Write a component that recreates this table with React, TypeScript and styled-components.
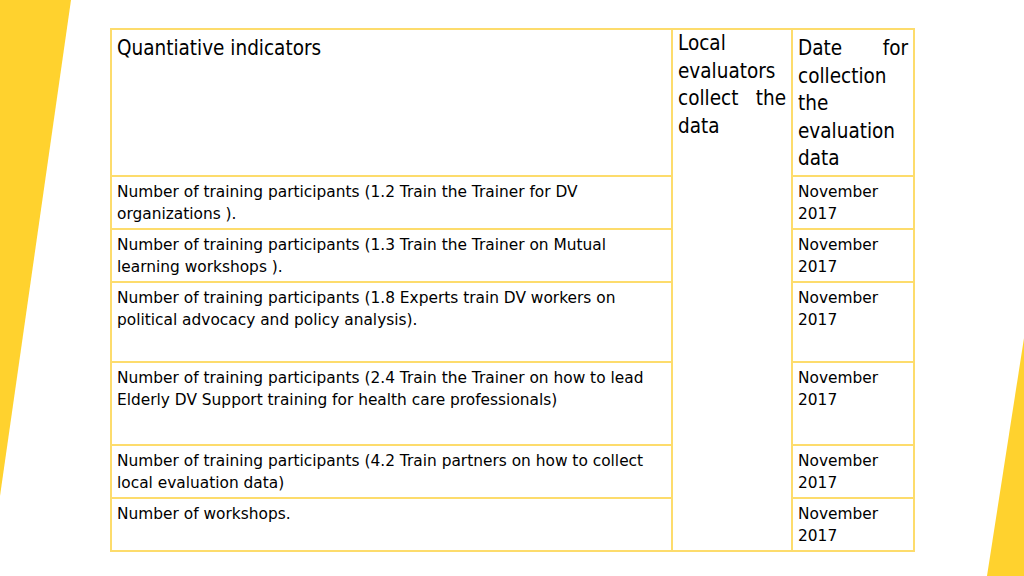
import React from "react";
import styled, { createGlobalStyle } from "styled-components";

const Global = createGlobalStyle`
  html, body { margin: 0; padding: 0; background: #ffffff; }
  body { font-family: "DejaVu Sans", sans-serif; color: #000; }
`;

const Slide = styled.div`
  position: relative;
  width: 1024px;
  height: 576px;
  overflow: hidden;
  background: #ffffff;
  display: flex;
  padding: 28px 0 0 110px;
  box-sizing: border-box;
`;

const Deco = styled.svg`
  position: absolute;
  left: 0;
  top: 0;
  pointer-events: none;
`;

const Table = styled.table`
  position: relative;
  border-collapse: collapse;
  table-layout: fixed;
  width: 803px;
  height: 522px;
`;

const Cell = styled.td<{ $w?: number; $h?: number; $head?: boolean; $justify?: boolean; $pt?: number }>`
  border: 2px solid #fddc6c;
  vertical-align: top;
  padding: ${(p) => p.$pt ?? 4}px 5px 0 5px;
  width: ${(p) => (p.$w ? `${p.$w}px` : "auto")};
  height: ${(p) => (p.$h ? `${p.$h}px` : "auto")};
  box-sizing: border-box;
  font-family: ${(p) => (p.$head ? '"DejaVu Sans Condensed", "DejaVu Sans", sans-serif' : '"DejaVu Sans", sans-serif')};
  font-size: ${(p) => (p.$head ? "20.5px" : "15.4px")};
  line-height: ${(p) => (p.$head ? "27.5px" : "22px")};
  text-align: ${(p) => (p.$justify ? "justify" : "left")};
`;

const rows = [
  { text: "Number of training participants (1.2 Train the Trainer for DV organizations ).", h: 53 },
  { text: "Number of training participants (1.3 Train the Trainer on Mutual learning workshops ).", h: 53 },
  { text: "Number of training participants (1.8 Experts train DV workers on political advocacy and policy analysis).", h: 80 },
  { text: "Number of training participants (2.4 Train the Trainer on how to lead Elderly DV Support training for health care professionals)", h: 83 },
  { text: "Number of training participants (4.2 Train partners on how to collect local evaluation data)", h: 53 },
  { text: "Number of workshops.", h: 53 },
];

export default function App() {
  return (
    <>
      <Global />
      <Slide>
        <Deco width="1024" height="576" viewBox="0 0 1024 576">
          <polygon points="0,0 71,0 0,496" fill="#ffd22e" />
          <polygon points="1024,338 1024,576 987,576" fill="#ffd22e" />
        </Deco>
        <Table>
          <tbody>
            <tr>
              <Cell $w={561} $h={147} $head $pt={5}>Quantiative indicators</Cell>
              <Cell $w={120} $head $justify rowSpan={7} $pt={0}>
                Local evaluators collect the data
              </Cell>
              <Cell $w={122} $head $justify $pt={5}>
                Date for collection the evaluation data
              </Cell>
            </tr>
            {rows.map((r, i) => (
              <tr key={i}>
                <Cell $h={r.h}>{r.text}</Cell>
                <Cell>
                  November
                  <br />
                  2017
                </Cell>
              </tr>
            ))}
          </tbody>
        </Table>
      </Slide>
    </>
  );
}
